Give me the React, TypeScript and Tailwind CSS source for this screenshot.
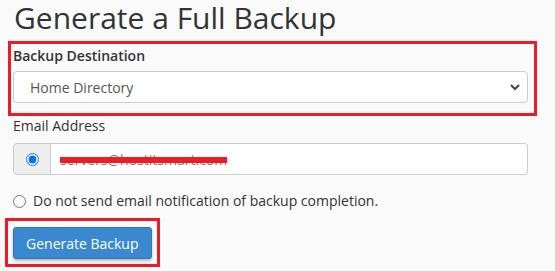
import React from 'react'

function Highlight({ className }: { className: string }) {
  // red annotation frame drawn over a section
  return <div className={`pointer-events-none absolute border-[3px] border-[#ed1c24] ${className}`} />
}

export default function App() {
  return (
    <div
      className="h-[271px] w-[555px] overflow-hidden bg-[#fafafa] pt-[3px] pl-[13px] pr-[27px] text-[#333]"
      style={{ fontFamily: '"Open Sans", "Liberation Sans", sans-serif' }}
    >
      <h1 className="h-[32px] pl-[1px] text-[30px] leading-[29px] font-normal">Generate a Full Backup</h1>

      {/* Backup destination */}
      <div className="relative mt-[11px] pb-[13px]">
        <Highlight className="-top-[5px] -right-[9px] bottom-0 -left-[5px]" />
        <label className="block h-[20px] text-[14px] leading-[20px] font-semibold">Backup Destination</label>
        <div className="mt-[5px] flex h-[32px] items-center justify-between rounded-[4px] border border-[#ccc] bg-white pr-[6px] pl-[16px] text-[14px] text-[#555]">
          <span>Home Directory</span>
          <svg width="12" height="12" viewBox="0 0 12 12" className="text-[#444]">
            <path d="M2 4l4 4 4-4" fill="none" stroke="currentColor" strokeWidth="2" />
          </svg>
        </div>
      </div>

      {/* Email */}
      <label className="block h-[20px] text-[14px] leading-[20px] font-medium">Email Address</label>
      <div className="mt-[7px] flex h-[32px]">
        <div className="flex w-[38px] items-center justify-center rounded-l-[4px] border border-[#ccc] bg-[#eee]">
          <input type="radio" name="notify" defaultChecked className="m-0 h-[13px] w-[13px]" />
        </div>
        <div className="flex flex-1 items-center rounded-r-[4px] border border-l-0 border-[#ccc] bg-white pl-[9px] text-[14px] text-[#777]">
          <span className="line-through decoration-[#ee1c25] decoration-[6px]">servers@hostitsmart.com</span>
        </div>
      </div>

      <label className="mt-[16px] flex h-[20px] items-center gap-[7px] text-[14px] leading-[20px]">
        <input type="radio" name="notify" className="m-0 h-[13px] w-[13px]" />
        <span>Do not send email notification of backup completion.</span>
      </label>

      {/* Submit */}
      <div className="relative mt-[16px] inline-block">
        <Highlight className="-top-[9px] -right-[8px] -bottom-[8px] -left-[8px]" />
        <button className="h-[32px] rounded-[3px] border border-[#2f76b8] bg-[#3a89d0] px-[12px] text-[14px] text-white shadow-[0_2px_3px_rgba(0,0,0,0.25)]">
          Generate Backup
        </button>
      </div>
    </div>
  )
}
